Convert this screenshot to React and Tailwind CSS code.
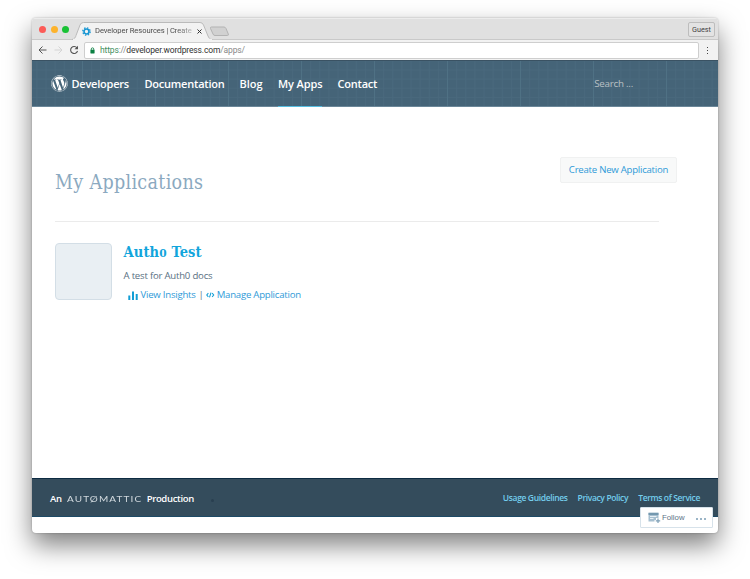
import React from "react";
import { FaWordpress } from "react-icons/fa";

const openSans = "font-['Open_Sans',sans-serif]";
const serif = "font-['DejaVu_Serif_Condensed','DejaVu_Serif',serif] [font-stretch:condensed]";

function TitleBar() {
  return (
    <div className="relative flex h-[22px] items-center bg-[#e0e0e0] border-b border-[#c9c9c9] border-t border-t-[#ececec]">
      <div className="ml-[7px] flex gap-[4.5px]">
        <span className="size-[7px] rounded-full bg-[#fc5b57]" />
        <span className="size-[7px] rounded-full bg-[#fdb32c]" />
        <span className="size-[7px] rounded-full bg-[#19c235]" />
      </div>
      <svg className="absolute left-[40px] top-[3px]" width="162" height="18" viewBox="0 0 162 18">
        <path d="M0 17.5 C3 17 3.500 15 4 13.500 L8 3 Q9 .5 11.500 .5 H128 Q130.500 .5 131.500 3 L136 14 Q137 17.500 140 17.500 V18 H0Z" fill="#f2f2f2" stroke="#bababa" strokeWidth="1" />
        <path d="M1 17.500 H140" stroke="#f2f2f2" strokeWidth="1.500" />
        <path d="M139.500 5 H152 Q153.300 5 154 6.500 L156.300 12 Q156.800 13.500 155.300 13.500 H143 Q141.500 13.500 141 12 L138.500 6.500 Q138 5 139.500 5Z" fill="#d1d1d1" stroke="#b3b3b3" />
      </svg>
      <div className="absolute left-[50px] top-[3px] flex h-[18px] items-center">
        <svg width="9" height="9" viewBox="0 0 20 20">
          <circle cx="10" cy="10" r="5.500" fill="none" stroke="#1795d2" strokeWidth="3.600" />
          <circle cx="10" cy="10" r="8.200" fill="none" stroke="#1795d2" strokeWidth="3" strokeDasharray="3.220 3.220" />
        </svg>
        <span className="ml-[4px] w-[99px] whitespace-nowrap bg-[linear-gradient(90deg,#444_82%,#44444440)] bg-clip-text font-[Roboto,sans-serif] text-[7.600px] leading-[12px] tracking-[-0.080px] text-transparent">
          Developer Resources | Create
        </span>
        <svg className="ml-[3px]" width="5" height="5" viewBox="0 0 5 5">
          <path d="M.5 .5 L4.500 4.500 M4.500 .5 L.5 4.500" stroke="#333" />
        </svg>
      </div>
      <div className="ml-auto mr-[3px] flex h-[15px] w-[27px] items-center justify-center rounded-[2px] border border-[#bdbdbd] bg-[#e3e3e3] pt-[2px] font-[Roboto,sans-serif] text-[7.300px] leading-[10px] text-[#444]">
        Guest
      </div>
    </div>
  );
}

function Toolbar() {
  return (
    <div className="flex h-[20px] items-center bg-[#f2f2f2]">
      <svg className="ml-[6px]" width="41" height="10" viewBox="0 0 41 10" fill="none">
        <path d="M8.500 5 H1 M4.500 1.500 L1 5 L4.500 8.500" stroke="#555" />
        <path d="M16.500 5 H24 M20.500 1.500 L24 5 L20.500 8.500" stroke="#d4d4d4" />
        <path d="M39 3 A3.500 3.500 0 1 0 39.500 6" stroke="#555" strokeWidth="1.100" />
        <path d="M40 .8 V4.300 H36.500Z" fill="#555" />
      </svg>
      <div className="ml-[5px] flex h-[17px] w-[615px] items-center rounded-[2px] border border-[#cecece] bg-white">
        <svg className="ml-[5px]" width="5" height="7" viewBox="0 0 6 8">
          <rect x=".5" y="3" width="5" height="4.500" rx=".5" fill="#0b8043" />
          <path d="M1.500 3.500 V2.300 A1.500 1.500 0 0 1 4.500 2.300 V3.500" fill="none" stroke="#0b8043" />
        </svg>
        <span className="ml-[5px] font-[Roboto,sans-serif] text-[8.500px] leading-[12px] tracking-[-0.150px] text-[#888]">
          <span className="text-[#3f8f60]">https</span>://<span className="text-[#333]">developer.wordpress.com</span>/apps/
        </span>
      </div>
      <div className="ml-[8px] flex flex-col gap-[2px]">
        <i className="size-[1px] bg-[#444]" />
        <i className="size-[1px] bg-[#444]" />
        <i className="size-[1px] bg-[#444]" />
      </div>
    </div>
  );
}

function Grid() {
  return (
    <svg className="absolute inset-0" width="686" height="45">
      <defs>
        <pattern id="minor" x="4.400" y="8.500" width="9.125" height="9.125" patternUnits="userSpaceOnUse">
          <path d="M0 .5 H9.125 M.5 0 V9.125" stroke="#9bc4d8" strokeOpacity=".05" />
        </pattern>
        <pattern id="major" x="50" y="0" width="73" height="47" patternUnits="userSpaceOnUse">
          <path d="M.5 0 V47" stroke="#9bc4d8" strokeOpacity=".08" />
        </pattern>
      </defs>
      <rect width="686" height="45" fill="url(#minor)" />
      <rect width="686" height="45" fill="url(#major)" />
    </svg>
  );
}

function Header() {
  return (
    <header className={`relative h-[47px] border-y border-t-[#3a5263] border-b-[#6b8799] bg-[#456478] ${openSans}`}>
      <Grid />
      <nav className="relative flex h-[46px] items-center pl-[19px] text-[11px] font-semibold tracking-[-0.220px] text-white">
        <FaWordpress className="-mt-[2px] size-[17px]" />
        <span className="ml-[3.500px] w-[73px]">Developers</span>
        <span className="w-[95px]">Documentation</span>
        <span className="w-[38.500px] tracking-normal">Blog</span>
        <span className="flex h-[46px] w-[44px] items-center whitespace-nowrap border-b border-[#55bde0] pt-px tracking-[-0.120px]">My Apps</span>
        <span className="ml-[15.500px]">Contact</span>
        <span className="ml-auto mr-[85px] text-[9.800px] font-normal tracking-[-0.250px] text-[#b9c0c4]">Search ...</span>
      </nav>
    </header>
  );
}

function Content() {
  return (
    <main className={`h-[371px] px-[23px] ${openSans}`}>
      <div className="flex h-[114px] w-[622px] justify-between">
        <h1 className={`mt-[62px] whitespace-nowrap text-[19.500px] leading-[28px] tracking-[0.320px] text-[#8ba9c0] ${serif}`}>My Applications</h1>
        <button className="mt-[50px] flex h-[26px] w-[117px] items-center justify-center whitespace-nowrap rounded-[2px] border border-[#f0f1f1] bg-[#f8f9f9] text-[9.600px] tracking-[-0.240px] text-[#2f9ad8]">
          Create New Application
        </button>
      </div>
      <div className="w-[604px] border-b border-[#ebebeb]" />
      <section className="mt-[20px] flex">
        <div className="mt-px h-[57px] w-[57px] rounded-[4px] border border-[#d3dee6] bg-[#e9eff3]" />
        <div className="ml-[11.500px]">
          <h2 className={`whitespace-nowrap text-[14.500px] font-bold leading-[20px] tracking-[0.150px] text-[#12a5dc] ${serif}`}>
            Auth<span className="text-[11.800px]">0</span> Test
          </h2>
          <p className="mt-[5px] text-[9.600px] leading-[16px] tracking-[-0.210px] text-[#587083]">A test for Auth0 docs</p>
          <div className="mt-[3px] flex items-center pl-[4px] text-[9.600px] leading-[16px] tracking-[-0.230px] text-[#2f9ad8]">
            <svg className="mr-[3px]" width="10" height="9" viewBox="0 0 10 9" fill="#119ed5">
              <path d="M.3 4.500 H2.300 V9 H.3Z M4 .5 H6 V9 H4Z M7.700 3 H9.700 V9 H7.700Z" />
            </svg>
            View Insights
            <span className="ml-[3px] mr-[2.500px] text-[#587083]">|</span>
            <svg className="mr-[2px]" width="8.500" height="6" viewBox="0 0 9 6" fill="none" stroke="#119ed5" strokeWidth="1.100">
              <path d="M2.500 1 L.8 3 L2.500 5 M6.500 1 L8.200 3 L6.500 5 M5.300 .5 L3.700 5.500" />
            </svg>
            Manage Application
          </div>
        </div>
      </section>
    </main>
  );
}

function Footer() {
  return (
    <footer className={`flex h-[39px] items-center border-y border-t-[#0d2b42] border-b-[#1d4a66] bg-[#344c5c] pl-[18px] pr-[18px] ${openSans} whitespace-nowrap font-semibold`}>
      <div className="flex items-center pt-[3px] text-[9.500px] tracking-[-0.340px] text-white">
        An
        <span className="ml-[5px] mr-[3px] w-[77px]">
          <span className="inline-block origin-left scale-x-130 font-[Lato,sans-serif] text-[7.700px] font-normal tracking-[0.850px] text-[#d0d8dd]">AUTØMATTIC</span>
        </span>
        Production
        <span className="ml-[17px] mt-[2px] size-[3px] rounded-full bg-[#293f50]" />
      </div>
      <div className="ml-auto flex gap-[10px] pt-[2px] text-[8.500px] tracking-[-0.360px] text-[#73cdec]">
        <a>Usage Guidelines</a>
        <a>Privacy Policy</a>
        <a>Terms of Service</a>
      </div>
    </footer>
  );
}

function FollowBar() {
  return (
    <div className="absolute bottom-[5px] right-[5px] flex h-[21px] w-[73px] items-center rounded-[1px] border border-[#d7e2ea] bg-white">
      <svg className="ml-[7px]" width="13" height="12" viewBox="0 0 13 12">
        <path d="M.5 .5 H10.500 V6 H8 V8 H6.500 V9.500 H.5Z" fill="#a6bfd0" />
        <path d="M.5 2 H10.500" stroke="#6f93ac" strokeWidth="1.800" />
        <path d="M2 4.500 H8.500 M2 6.500 H5.500" stroke="#e9f0f5" />
        <path d="M10 6.500 V11 M7.800 8.800 H12.200" stroke="#7d9fb6" strokeWidth="1.200" />
      </svg>
      <span className="ml-[1px] font-['Liberation_Sans',sans-serif] text-[7.800px] text-[#5b7387]">Follow</span>
      <div className="ml-auto mr-[6px] mt-[2px] flex gap-[2px]">
        <i className="size-[2px] rounded-full bg-[#7a9cb5]" />
        <i className="size-[2px] rounded-full bg-[#7a9cb5]" />
        <i className="size-[2px] rounded-full bg-[#7a9cb5]" />
      </div>
    </div>
  );
}

export default function App() {
  return (
    <div className="h-[579px] w-[750px] overflow-hidden bg-white pl-[32px] pt-[18px]">
      <div className="relative h-[515px] w-[686px] rounded-[4px] bg-white shadow-[0_12px_26px_rgba(0,0,0,0.5),0_0_2px_rgba(0,0,0,0.3)]">
        <div className="overflow-hidden rounded-t-[4px]">
          <TitleBar />
          <Toolbar />
          <Header />
          <Content />
          <Footer />
        </div>
        <FollowBar />
      </div>
    </div>
  );
}
